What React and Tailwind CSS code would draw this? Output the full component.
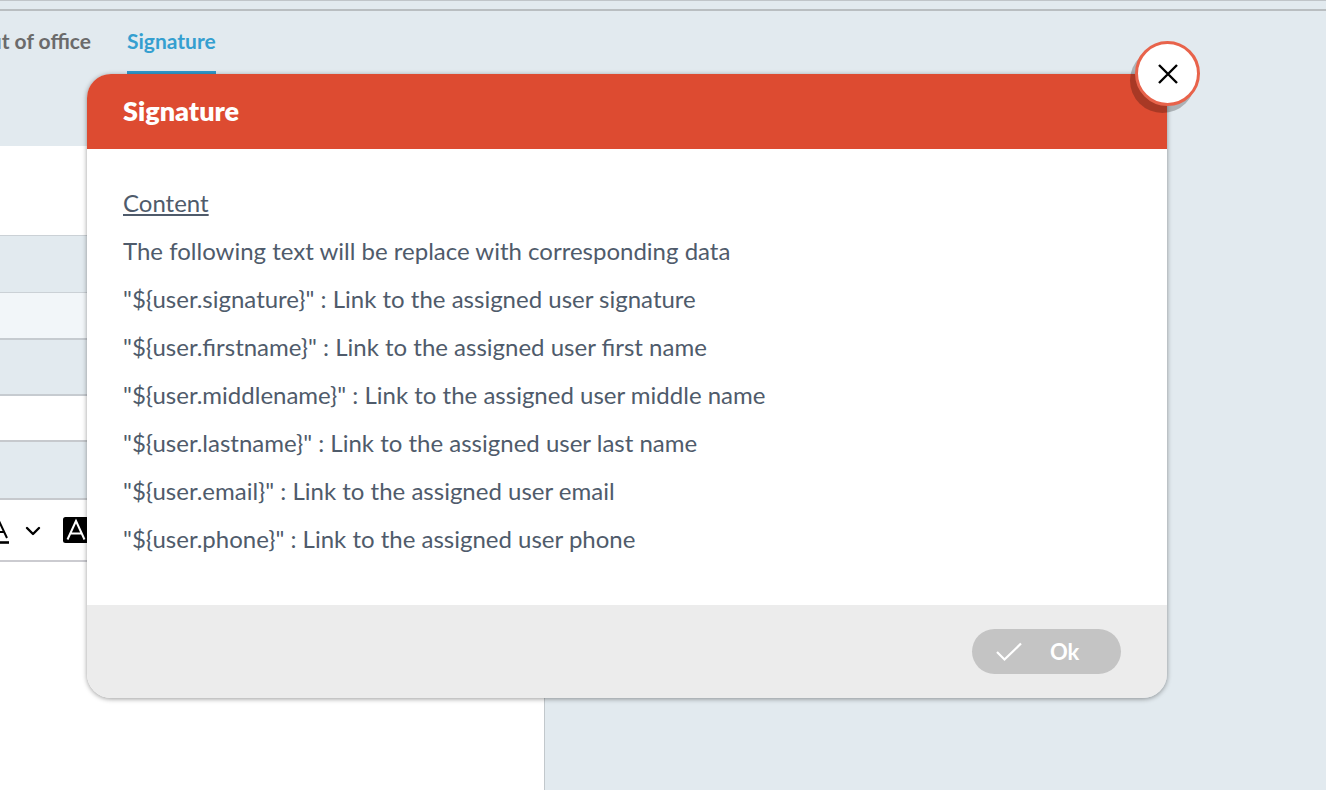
import { useState } from 'react';

const placeholders = [
  { key: '${user.signature}', label: 'Link to the assigned user signature' },
  { key: '${user.firstname}', label: 'Link to the assigned user first name' },
  { key: '${user.middlename}', label: 'Link to the assigned user middle name' },
  { key: '${user.lastname}', label: 'Link to the assigned user last name' },
  { key: '${user.email}', label: 'Link to the assigned user email' },
  { key: '${user.phone}', label: 'Link to the assigned user phone' }
];

function Tabs() {
  return (
    <nav className="flex h-16 gap-9 text-[21px] font-bold">
      <div className="flex w-[91px] justify-end overflow-hidden">
        <a href="#out-of-office" className="flex shrink-0 items-center whitespace-nowrap border-b-4 border-transparent text-[#6b6b6b]">
          Out of office
        </a>
      </div>
      <a href="#signature" className="flex items-center border-b-4 border-[#3199cb] text-[#359fd0]">
        Signature
      </a>
    </nav>
  );
}

function EditorToolbar() {
  return (
    <div className="flex h-[62px] items-center border-b-2 border-[#cbcbd0] text-black">
      {/* Text color */}
      <div className="flex w-[9px] justify-end overflow-hidden">
        <button type="button" aria-label="Text color" className="shrink-0">
          <svg width="26" height="28" viewBox="0 0 26 28" fill="none" stroke="currentColor" strokeWidth="2">
            <path d="M7 22 L15.5 4 L24 22 M10 16 H21" />
            <path d="M0 26.5 H26" strokeWidth="2.6" />
          </svg>
        </button>
      </div>
      <button type="button" aria-label="Text color options" className="ml-4">
        <svg width="16" height="16" viewBox="0 0 16 16" fill="none" stroke="currentColor" strokeWidth="2.4" strokeLinecap="round" strokeLinejoin="round">
          <path d="M2 6 L8 12 L14 6" />
        </svg>
      </button>
      {/* Background color */}
      <button type="button" aria-label="Background color" className="ml-[22px]">
        <svg width="26" height="26" viewBox="0 0 26 26" fill="none">
          <rect width="26" height="26" rx="2.5" fill="black" />
          <path d="M4.5 22.5 L13 4 L21.5 22.5 M7.5 16.5 H18.5" stroke="white" strokeWidth="2" />
        </svg>
      </button>
    </div>
  );
}

function SettingsForm() {
  return (
    <div className="flex w-[545px] flex-1 flex-col border-r border-[#c2c8cc] bg-white">
      <div className="h-[89px]" />
      <div className="h-[58px] border-y border-[#cbd1d6] bg-[#e2eaef]" />
      <div className="h-[45px] bg-[#f2f6f9]" />
      <div className="h-[58px] border-t-2 border-b-2 border-[#c6cbd0] bg-[#e2eaef]" />
      <div className="h-[44px]" />
      <div className="h-[60px] border-y-2 border-[#c6c9cd] bg-[#e2eaef]" />
      <EditorToolbar />
    </div>
  );
}

function SignatureDialog({ onClose }) {
  return (
    <div
      role="dialog"
      aria-labelledby="dialog-title"
      className="relative flex-1 rounded-3xl shadow-[0_1px_5px_rgba(0,0,0,0.4)]"
    >
      <header className="flex h-[75px] items-center rounded-t-3xl bg-[#dd4b31] px-9">
        <h2 id="dialog-title" className="text-[27px] font-extrabold text-white">Signature</h2>
      </header>

      <div className="bg-white px-9 pt-[30px] pb-[42px] text-2xl leading-12 text-[#4f5b6b]">
        <p className="underline">Content</p>
        <p>The following text will be replace with corresponding data</p>
        {placeholders.map((item) => (
          <p key={item.key}>{`"${item.key}" : ${item.label}`}</p>
        ))}
      </div>

      <footer className="flex h-[93px] items-center justify-end rounded-b-3xl bg-[#ececec] pr-[46px]">
        <button
          type="button"
          onClick={onClose}
          className="flex h-[45px] w-[149px] items-center gap-7 rounded-full bg-[#c4c4c4] pl-6 text-[22px] font-bold text-white"
        >
          <svg width="26" height="20" viewBox="0 0 26 20" fill="none" stroke="currentColor" strokeWidth="2.2">
            <path d="M1 10 L8.5 17.5 L25 1.5" />
          </svg>
          Ok
        </button>
      </footer>

      {/* Close button sits on the top right corner */}
      <button
        type="button"
        aria-label="Close"
        onClick={onClose}
        className="absolute -top-[33px] -right-[33px] flex size-[65px] items-center justify-center rounded-full border-3 border-[#e8634b] bg-white text-black shadow-[-5px_7px_0_rgba(0,0,0,0.24)]"
      >
        <svg width="20" height="20" viewBox="0 0 20 20" fill="none" stroke="currentColor" strokeWidth="2.4">
          <path d="M1 1 L19 19 M19 1 L1 19" />
        </svg>
      </button>
    </div>
  );
}

export default function App() {
  const [open, setOpen] = useState(true);

  return (
    <div className="relative flex min-h-screen flex-col overflow-hidden bg-[#e2eaef] font-['Lato',sans-serif]">
      <div className="h-[11px] border-t border-b-2 border-t-[#c0c5c9] border-b-[#b9bec1]" />
      <Tabs />
      <main className="flex flex-1 flex-col pt-[71px]">
        <SettingsForm />
      </main>

      {open && (
        <div className="absolute inset-x-0 top-0 flex pt-[74px] pr-[159px] pl-[87px]">
          <SignatureDialog onClose={() => setOpen(false)} />
        </div>
      )}
    </div>
  );
}
